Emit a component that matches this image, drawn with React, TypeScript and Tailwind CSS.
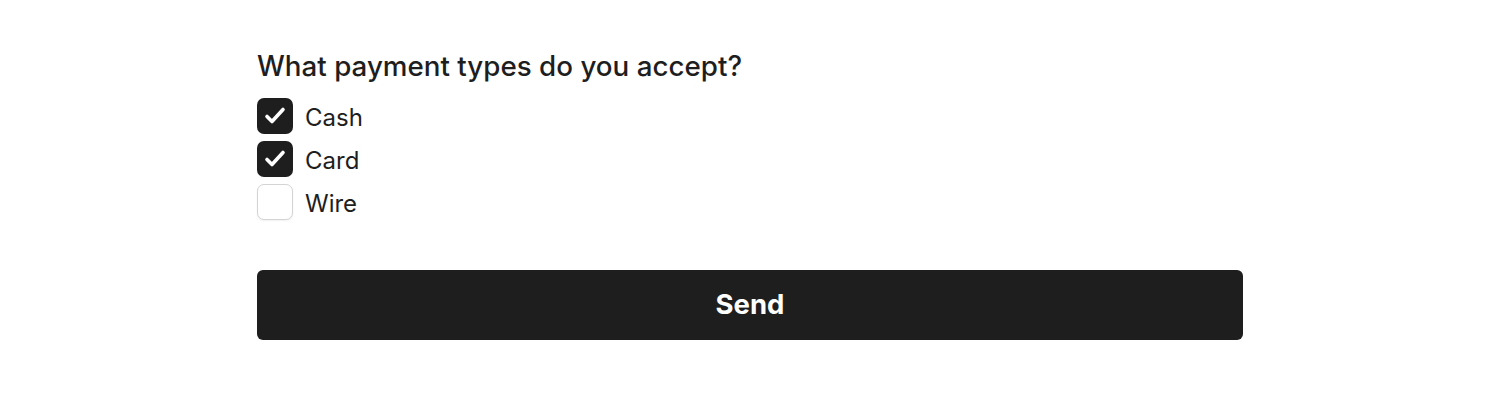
import { useState } from 'react'

const options = ['Cash', 'Card', 'Wire']

export default function App() {
  const [checked, setChecked] = useState<Record<string, boolean>>({ Cash: true, Card: true, Wire: false })

  return (
    <div className="min-h-[395px] bg-white font-['Inter',sans-serif] text-[#1e1e1e]">
      <div className="mx-auto w-[986px] pt-[49px]">
        <h2 className="text-[27.75px] leading-[34px] font-medium">What payment types do you accept?</h2>
        <div className="mt-[15px] flex flex-col gap-[7px]">
          {options.map((o) => (
            <label key={o} className="flex items-center gap-[12px] cursor-pointer">
              <button
                type="button"
                onClick={() => setChecked((c) => ({ ...c, [o]: !c[o] }))}
                className={
                  checked[o]
                    ? 'flex h-[36px] w-[36px] items-center justify-center rounded-[7px] bg-[#1e1e1e]'
                    : 'flex h-[36px] w-[36px] items-center justify-center rounded-[7px] border border-[#d4d4d4] bg-white shadow-[0_1px_2px_rgba(0,0,0,0.06)]'
                }
              >
                {checked[o] && (
                  <svg width="36" height="36" viewBox="0 0 36 36" fill="none" stroke="white" strokeWidth="3.6" strokeLinecap="round" strokeLinejoin="round">
                    <path d="M10 18.5l5 5L26 11.5" />
                  </svg>
                )}
              </button>
              <span className="translate-y-[2px] text-[24px] leading-[36px]">{o}</span>
            </label>
          ))}
        </div>
        <button type="button" className="mt-[50px] h-[70px] w-full rounded-[6px] bg-[#1e1e1e] text-[27.5px] font-bold text-white">
          Send
        </button>
      </div>
    </div>
  )
}
